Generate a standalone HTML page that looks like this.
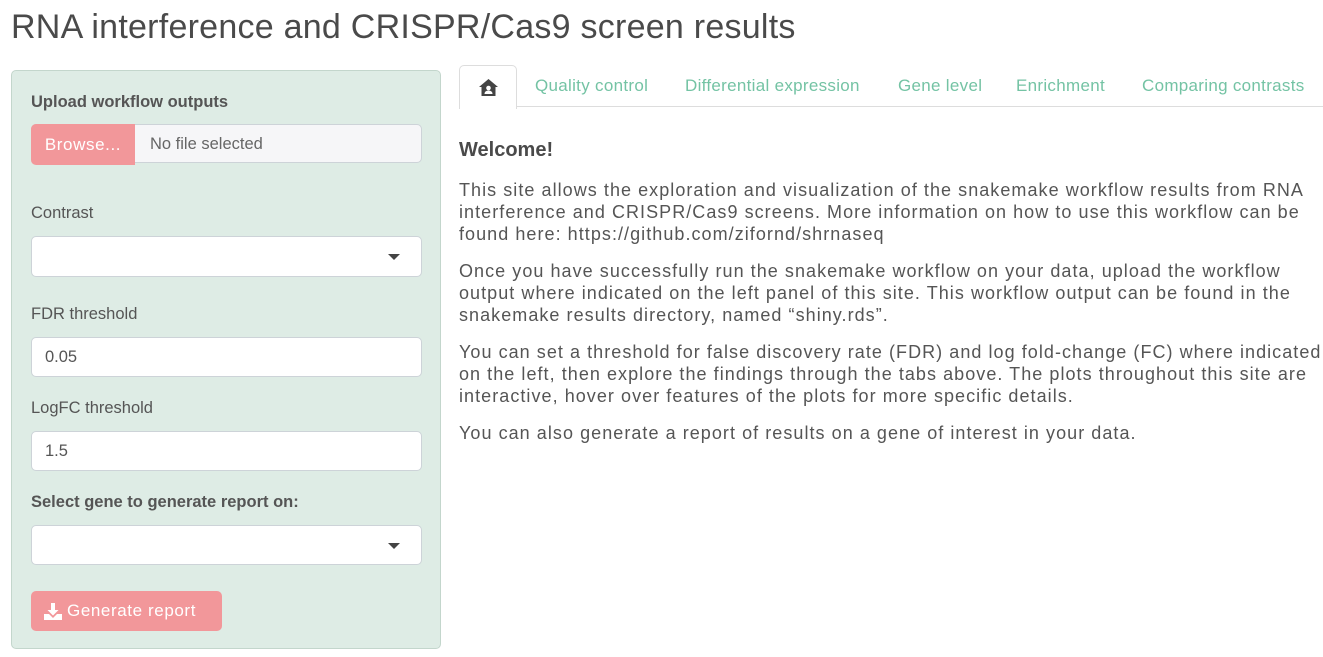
<!DOCTYPE html>
<html><head><style>
body{margin:0;width:1323px;height:657px;background:#fff;font-family:"Liberation Sans",sans-serif;color:#555;position:relative;overflow:hidden}
h1{position:absolute;left:11px;top:8px;margin:0;font-size:34px;font-weight:normal;color:#4a4a4a;letter-spacing:0.25px}
.panel{position:absolute;left:11px;top:70px;width:428px;height:577px;background:#deece5;border:1px solid #c3d6cc;border-radius:5px}
.lbl{position:absolute;left:19px;font-size:16.5px;color:#555}
.b{font-weight:bold}
.inp{position:absolute;left:19px;width:391px;height:39px;background:#fff;border:1px solid #cdd3d8;border-radius:5px;font-size:16.5px;line-height:39px;box-sizing:border-box;padding-left:13px;color:#555}
.caret{position:absolute;right:21px;top:17px;width:0;height:0;border-left:6px solid transparent;border-right:6px solid transparent;border-top:6px solid #444}
.btn{position:absolute;background:#f2979a;color:#fff;border-radius:5px;font-size:17px;letter-spacing:0.6px}
.tabs{position:absolute;left:459px;top:106px;width:864px;border-bottom:1px solid #ddd}
.tab{position:absolute;top:86px;font-size:17px;color:#74c3a4;transform:translateY(-50%);letter-spacing:0.3px}
.hometab{position:absolute;left:459px;top:65px;width:56px;height:43px;background:#fff;border:1px solid #ddd;border-bottom:none;border-radius:5px 5px 0 0}
.txt{position:absolute;left:459px;font-size:18px;line-height:22px;color:#555;white-space:nowrap;letter-spacing:1.05px}
</style></head><body>
<h1>RNA interference and CRISPR/Cas9 screen results</h1>
<div class="panel">
 <div class="lbl b" style="top:22px">Upload workflow outputs</div>
 <div class="inp" style="top:53px;background:#f6f6f8;padding-left:118px;color:#666">No file selected</div>
 <div class="btn" style="left:19px;top:53px;width:104px;height:41px;line-height:41px;text-align:center;border-radius:5px 0 0 5px">Browse...</div>
 <div class="lbl" style="top:133px">Contrast</div>
 <div class="inp" style="top:165px;height:41px"><div class="caret"></div></div>
 <div class="lbl" style="top:234px">FDR threshold</div>
 <div class="inp" style="top:266px;height:40px">0.05</div>
 <div class="lbl" style="top:328px">LogFC threshold</div>
 <div class="inp" style="top:360px;height:40px">1.5</div>
 <div class="lbl b" style="top:422px">Select gene to generate report on:</div>
 <div class="inp" style="top:454px;height:40px"><div class="caret"></div></div>
 <div class="btn" style="left:19px;top:520px;width:191px;height:40px;line-height:40px;padding-left:0">
  <svg style="position:absolute;left:13px;top:12px" width="18" height="17" viewBox="0 0 18 17"><path d="M7 0h4v7h3.5L9 12.5 3.5 7H7z" fill="#fff"/><path d="M0 11h5l4 4 4-4h5v6H0z" fill="#fff"/></svg>
  <span style="position:absolute;left:36px">Generate report</span></div>
</div>
<div class="tabs"></div>
<div class="hometab"><svg style="position:absolute;left:19px;top:13px" width="19" height="17" viewBox="0 0 19 17"><path d="M9.5 0L0 8h2.5v9h14V8H19z" fill="#444"/><circle cx="9.5" cy="9" r="2.3" fill="#fff"/><path d="M5.5 15c0-2.5 2-3.5 4-3.5s4 1 4 3.5z" fill="#fff"/></svg></div>
<div class="tab" style="left:535px">Quality control</div>
<div class="tab" style="left:685px">Differential expression</div>
<div class="tab" style="left:898px">Gene level</div>
<div class="tab" style="left:1016px">Enrichment</div>
<div class="tab" style="left:1142px">Comparing contrasts</div>
<div class="txt" style="top:139px;font-size:20px;font-weight:bold;color:#4a4a4a;letter-spacing:0">Welcome!</div>
<div class="txt" style="top:179px">This site allows the exploration and visualization of the snakemake workflow results from RNA<br>interference and CRISPR/Cas9 screens. More information on how to use this workflow can be<br>found here: https://github.com/zifornd/shrnaseq</div>
<div class="txt" style="top:260px">Once you have successfully run the snakemake workflow on your data, upload the workflow<br>output where indicated on the left panel of this site. This workflow output can be found in the<br>snakemake results directory, named “shiny.rds”.</div>
<div class="txt" style="top:341px">You can set a threshold for false discovery rate (FDR) and log fold-change (FC) where indicated<br>on the left, then explore the findings through the tabs above. The plots throughout this site are<br>interactive, hover over features of the plots for more specific details.</div>
<div class="txt" style="top:422px">You can also generate a report of results on a gene of interest in your data.</div>
</body></html>
